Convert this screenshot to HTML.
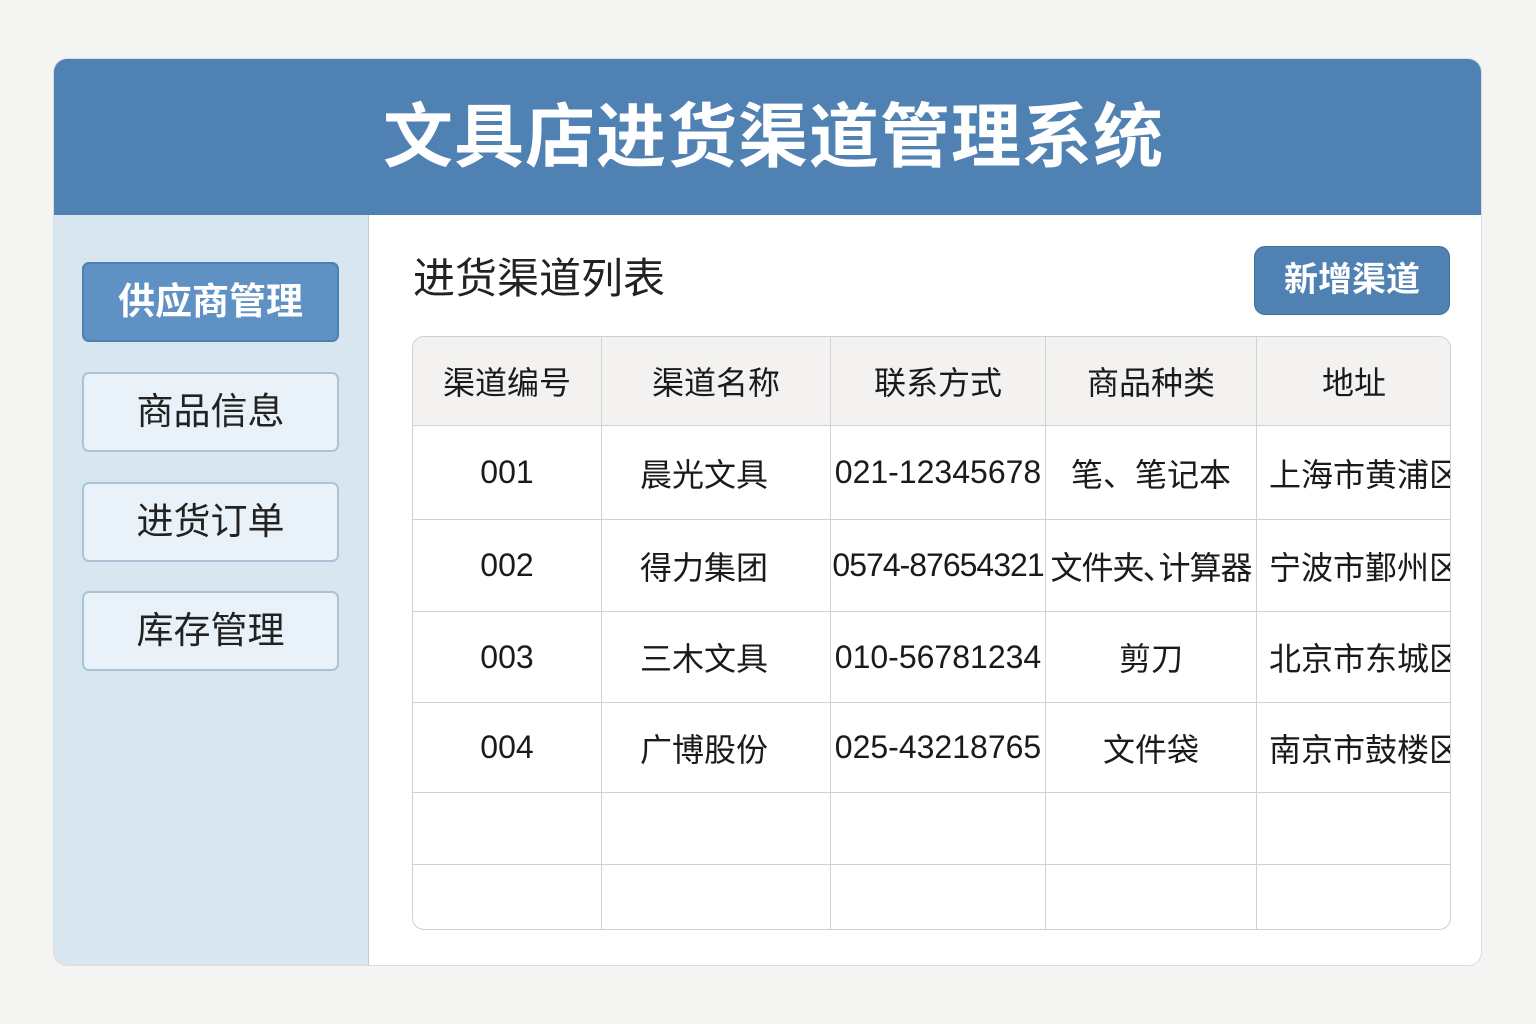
<!DOCTYPE html><html><head><meta charset="utf-8"><style>
*{margin:0;padding:0;box-sizing:border-box}
body{width:1536px;height:1024px;background:#f4f4f2;position:relative;font-family:"Liberation Sans","Noto Sans CJK SC",sans-serif;overflow:hidden}
.card{position:absolute;left:53px;top:58px;width:1429px;height:908px;border-radius:14px;background:#fff;border:1px solid #d8dde2;overflow:hidden}
.hd{position:absolute;left:0;top:0;width:100%;height:156px;background:#5081b3;color:#fff;font-size:70px;font-weight:bold;text-align:center;line-height:156px;letter-spacing:1px;padding-left:12px}
.sb{position:absolute;left:0;top:156px;width:315px;height:752px;background:#d7e6ef;border-right:1px solid #b9ccd9}
.nb{position:absolute;left:28px;width:257px;height:80px;border-radius:7px;background:#e8f2f8;border:2px solid #aac3d6;font-size:37px;text-align:center;line-height:76px;color:#222}
.nb.a{background:#5f91c4;color:#fff;border-color:#4c7fb2;font-weight:bold}
.h2{position:absolute;left:359px;top:199px;font-size:42px;color:#222;line-height:42px}
.btn{position:absolute;left:1200px;top:187px;width:196px;height:69px;border-radius:11px;background:#5081b3;border:1px solid #3f6f9f;color:#fff;font-size:34px;font-weight:bold;text-align:center;line-height:67px}
table{font-size:32px;color:#1a1a1a;border-collapse:collapse}
.tw{position:absolute;left:358px;top:277px;width:1039px;height:594px;border:1px solid #cfcfcf;border-radius:12px;overflow:hidden}
td{border:1px solid #d2d2d2;text-align:center;white-space:nowrap;overflow:hidden;padding:0}
tr.h td{background:#f3f2f0;height:89px}
</style></head><body>
<div class="card">
<div class="hd">文具店进货渠道管理系统</div>
<div class="sb">
<div class="nb a" style="top:47px">供应商管理</div>
<div class="nb" style="top:157px">商品信息</div>
<div class="nb" style="top:267px">进货订单</div>
<div class="nb" style="top:376px">库存管理</div>
</div>
<div class="h2">进货渠道列表</div>
<div class="btn">新增渠道</div>
<div class="tw">
<table style="position:absolute;left:-1px;top:-1px;width:1039px;table-layout:fixed">
<colgroup><col style="width:189px"><col style="width:229px"><col style="width:215px"><col style="width:211px"><col style="width:195px"></colgroup>
<tr class="h"><td>渠道编号</td><td>渠道名称</td><td>联系方式</td><td>商品种类</td><td>地址</td></tr>
<tr style="height:94px"><td>001</td><td style="padding-right:24px">晨光文具</td><td>021-12345678</td><td>笔、笔记本</td><td style="text-align:left;padding-left:12px">上海市黄浦区</td></tr>
<tr style="height:92px"><td>002</td><td style="padding-right:24px">得力集团</td><td style="letter-spacing:-1px">0574-87654321</td><td style="letter-spacing:-1px">文件夹､计算器</td><td style="text-align:left;padding-left:12px">宁波市鄞州区</td></tr>
<tr style="height:91px"><td>003</td><td style="padding-right:24px">三木文具</td><td>010-56781234</td><td>剪刀</td><td style="text-align:left;padding-left:12px">北京市东城区</td></tr>
<tr style="height:90px"><td>004</td><td style="padding-right:24px">广博股份</td><td>025-43218765</td><td>文件袋</td><td style="text-align:left;padding-left:12px">南京市鼓楼区</td></tr>
<tr style="height:72px"><td></td><td></td><td></td><td></td><td></td></tr>
<tr style="height:70px"><td></td><td></td><td></td><td></td><td></td></tr>
</table>
</div>
</div>
</body></html>
